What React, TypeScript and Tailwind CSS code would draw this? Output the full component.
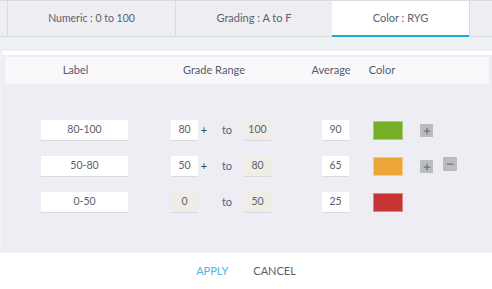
import { Plus, Minus } from 'lucide-react'

type Row = {
  label: string
  from: string
  to: string
  avg: string
  color: string
  editable: boolean
  add: boolean
  remove: boolean
}

const rows: Row[] = [
  { label: '80-100', from: '80', to: '100', avg: '90', color: 'bg-[#76ae25]', editable: true, add: true, remove: false },
  { label: '50-80', from: '50', to: '80', avg: '65', color: 'bg-[#eca638]', editable: true, add: true, remove: true },
  { label: '0-50', from: '0', to: '50', avg: '25', color: 'bg-[#c83434]', editable: false, add: false, remove: false },
]

function Box({ value, gray = false, className = '' }: { value: string; gray?: boolean; className?: string }) {
  return (
    <div
      className={`h-[21px] flex items-center justify-center text-[10.5px] border-b border-[#d9d9df] ${
        gray ? 'bg-[#eeede6]' : 'bg-white'
      } ${className}`}
    >
      {value}
    </div>
  )
}

export default function App() {
  return (
    <div
      className="w-[492px] h-[289px] bg-[#f0f1f5] text-[11px] text-[#5e606d] overflow-hidden flex flex-col"
      style={{ fontFamily: 'Lato, "Open Sans", sans-serif' }}
    >
      {/* Tabs */}
      <div className="h-[37px] flex border-t border-b border-[#d9d9de] bg-[#eeedf2] shrink-0">
        <div className="w-[8px] border-r border-[#d9d9de]" />
        <div className="w-[168px] flex items-center justify-center border-r border-[#d9d9de] text-[10.5px]">Numeric : 0 to 100</div>
        <div className="w-[156px] flex items-center justify-center">Grading : A to F</div>
        <div className="w-[137px] flex items-center justify-center bg-white border-b-2 border-[#22a9de] -mb-px">Color : RYG</div>
        <div className="flex-1 border-l border-[#d9d9de]" />
      </div>

      <div className="h-[14px] bg-[#eef1f4] shrink-0" />

      {/* Panel */}
      <div className="ml-[2px] flex-1 flex flex-col bg-[#ededf3] border-t-4 border-white">
        <div className="mx-[3px] mt-[2px] h-[27px] bg-[#f9f9fc] flex items-center text-[#585a68]">
          <div className="w-[141px] text-center">Label</div>
          <div className="w-[136px] text-center">Grade Range</div>
          <div className="w-[16px]" />
          <div className="w-[66px] text-center">Average</div>
          <div className="w-[36px] text-center">Color</div>
        </div>

        <div className="flex flex-col gap-[15px] pt-[36px]">
          {rows.map((r) => (
            <div key={r.label} className="flex items-center h-[21px]">
              <Box value={r.label} className="ml-[39px] w-[87px]" />
              <Box value={r.from} gray={!r.editable} className="ml-[43px] w-[27px]" />
              <div className="w-[12px] text-center text-[#444]">{r.add ? '+' : ''}</div>
              <div className="w-[34px] text-center">to</div>
              <Box value={r.to} gray className="w-[27px]" />
              <Box value={r.avg} className="ml-[51px] w-[27px]" />
              <div className={`ml-[24px] w-[30px] h-[19px] ${r.color} border border-white/40`} />
              {r.add && (
                <div className="ml-[17px] w-[13px] h-[13px] bg-[#b9bcc0] flex items-center justify-center">
                  <Plus size={10} strokeWidth={3} className="text-[#6e7278]" />
                </div>
              )}
              {r.remove && (
                <div className="ml-[10px] -mt-[6px] w-[14px] h-[14px] bg-[#b9bcc0] flex items-center justify-center">
                  <Minus size={10} strokeWidth={3} className="text-[#6e7278]" />
                </div>
              )}
            </div>
          ))}
        </div>
      </div>

      {/* Footer */}
      <div className="h-[36px] bg-white shrink-0 flex items-center justify-center gap-[25px] text-[11px]">
        <span className="text-[#4bb6e6]">APPLY</span>
        <span className="text-[#5a5d70]">CANCEL</span>
      </div>
    </div>
  )
}
